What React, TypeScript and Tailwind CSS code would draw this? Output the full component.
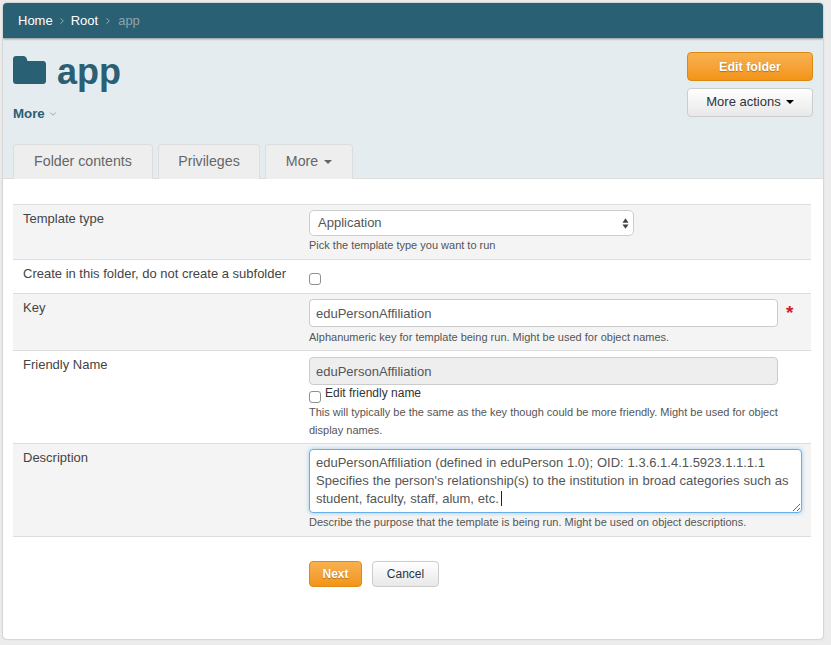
import { FC, ReactNode } from "react";
import { ChevronRight, ChevronDown } from "lucide-react";

const Caret: FC<{ className?: string }> = ({ className }) => (
  <span
    className={`inline-block h-0 w-0 border-x-[4px] border-t-[4px] border-x-transparent ${className}`}
  />
);

const Help: FC<{ children: ReactNode; className?: string }> = ({ children, className }) => (
  <p className={`text-[11px] text-[#555] ${className ?? "leading-[19px]"}`}>{children}</p>
);

const Row: FC<{
  label: string;
  shaded?: boolean;
  className?: string;
  children: ReactNode;
}> = ({ label, shaded, className, children }) => (
  <div
    className={`flex border-b border-[#ddd] ${shaded ? "bg-[#f4f4f4]" : "bg-white"} ${className}`}
  >
    <div className="w-[296px] shrink-0 pl-[10px] pt-[5px] text-[13px] leading-[18px] text-[#444]">
      {label}
    </div>
    <div className="min-w-0 flex-1">{children}</div>
  </div>
);

const inputClass =
  "block h-[28px] w-[469px] rounded-[4px] border border-[#ccc] px-[6px] text-[13px] text-[#555] outline-none";

const Checkbox: FC<{ className?: string }> = ({ className }) => (
  <input
    type="checkbox"
    className={`h-[12px] w-[12px] appearance-none rounded-[3px] border border-[#8f8f8f] bg-white ${className}`}
  />
);

const App: FC = () => {
  return (
    <div className="h-[645px] w-[831px] overflow-hidden bg-[#ececec] pl-[3px] pt-[3px] font-['Liberation_Sans',Arial,sans-serif]">
      <div className="flex h-[636px] w-[820px] flex-col overflow-hidden rounded-[4px] bg-white shadow-[0_0_2px_rgba(0,0,0,0.35)]">
        {/* breadcrumb */}
        <div className="z-10 flex h-[35px] shrink-0 items-center bg-[#2a6073] pl-[15px] text-[13px] shadow-[0_1px_2px_rgba(0,0,0,0.4)]">
          <span className="text-white">Home</span>
          <ChevronRight size={10} className="mx-[4px] text-[#a9c0c9]" />
          <span className="text-white">Root</span>
          <ChevronRight size={10} className="mx-[5px] text-[#a9c0c9]" />
          <span className="text-[#8fa5ae]">app</span>
        </div>

        {/* folder header */}
        <div className="flex h-[141px] shrink-0 flex-col justify-between border-b border-[#ddd] bg-[#e5ecf0] pl-[10px] pr-[10px]">
          <div className="flex justify-between">
            <div>
              <div className="mt-[14px] flex h-[40px] items-center text-[#2a6073]">
                <svg width="33" height="28" viewBox="0 0 33 28" fill="currentColor" className="mt-[-5px]">
                  <path d="M3 0h7c2.500 0 3.500 1.500 4 3.500l.5 1.500H30c1.700 0 3 1.300 3 3v17c0 1.700-1.300 3-3 3H3c-1.700 0-3-1.300-3-3V3c0-1.700 1.300-3 3-3z" />
                </svg>
                <h1 className="ml-[11px] text-[36px] font-bold leading-[40px]">app</h1>
              </div>
              <div className="mt-[13px] flex items-center text-[13.300px] font-bold leading-[18px] text-[#2a6073]">
                More
                <ChevronDown size={10} className="ml-[3px] text-[#8a9aa2]" />
              </div>
            </div>
            <div className="mt-[14px] flex w-[126px] flex-col gap-[7px]">
              <button className="h-[29px] rounded-[4px] border border-[#dd8a14] bg-gradient-to-b from-[#f8b14f] to-[#f39414] pt-[1px] text-[12.500px] font-bold text-white [text-shadow:0_1px_1px_rgba(0,0,0,0.3)]">
                Edit folder
              </button>
              <button className="flex h-[29px] items-center justify-center rounded-[4px] border border-[#ccc] bg-gradient-to-b from-white to-[#e8e8e8] pb-[2px] text-[13px] text-[#2b3440]">
                More actions
                <Caret className="ml-[5px] border-t-black" />
              </button>
            </div>
          </div>
          <div className="mb-[-1px] flex gap-[5px] text-[14.200px] text-[#666]">
            <div className="flex h-[35px] w-[140px] items-center justify-center rounded-t-[4px] border border-b-0 border-[#ddd] bg-[#eee]">
              Folder contents
            </div>
            <div className="flex h-[35px] w-[102px] items-center justify-center rounded-t-[4px] border border-b-0 border-[#ddd] bg-[#eee]">
              Privileges
            </div>
            <div className="flex h-[35px] w-[88px] items-center justify-center rounded-t-[4px] border border-b-0 border-[#ddd] bg-[#eee]">
              More
              <Caret className="ml-[6px] border-t-[#666]" />
            </div>
          </div>
        </div>

        {/* form */}
        <div className="pl-[10px] pr-[12px] pt-[25px]">
          <div className="border-t border-[#ddd]">
            <Row label="Template type" shaded className="h-[55px]">
              <div className="relative mt-[5px] w-[325px]">
                <select className="block h-[26px] w-full appearance-none rounded-[5px] border border-[#ccc] bg-white pl-[8px] text-[13px] text-[#555] outline-none">
                  <option>Application</option>
                </select>
                <svg width="7" height="11" viewBox="0 0 8 12" className="absolute right-[5px] top-[8px] text-[#444]" fill="currentColor">
                  <path d="M4 0l3.500 5H.5zM4 12L.5 7h7z" />
                </svg>
              </div>
              <Help>Pick the template type you want to run</Help>
            </Row>
            <Row label="Create in this folder, do not create a subfolder" className="h-[34px]">
              <Checkbox className="mt-[13px] block" />
            </Row>
            <Row label="Key" shaded className="h-[57px]">
              <div className="relative mt-[5px]">
                <input className={`${inputClass} bg-white`} defaultValue="eduPersonAffiliation" />
                <span className="absolute left-[477px] top-[2px] text-[19px] font-bold leading-[24px] text-[#d0202a]">
                  *
                </span>
              </div>
              <Help className="mt-[1px] leading-[19px]">Alphanumeric key for template being run. Might be used for object names.</Help>
            </Row>
            <Row label="Friendly Name" className="h-[93px]">
              <input
                className={`${inputClass} mt-[6px] bg-[#eee]`}
                defaultValue="eduPersonAffiliation"
                disabled
              />
              <label className="flex h-[18px] items-start text-[12px] leading-[16px] text-[#333]">
                <Checkbox className="mt-[6px] mr-[4px] shrink-0" />
                Edit friendly name
              </label>
              <div className="w-[490px]">
                <Help className="leading-[18px]">
                  This will typically be the same as the key though could be more friendly. Might be
                  used for object display names.
                </Help>
              </div>
            </Row>
            <Row label="Description" shaded className="h-[93px]">
              <div className="relative mt-[5px] w-[493px]">
                <textarea
                  className="block h-[64px] w-full rounded-[4px] border border-[#66afe9] bg-white px-[6px] pb-[2px] pt-[4px] text-[13px] leading-[18px] text-[#555] [word-spacing:0.3px] shadow-[0_0_4px_rgba(102,175,233,0.6)] outline-none"
                  defaultValue={
                    "eduPersonAffiliation (defined in eduPerson 1.0); OID: 1.3.6.1.4.1.5923.1.1.1.1\nSpecifies the person's relationship(s) to the institution in broad categories such as student, faculty, staff, alum, etc."
                  }
                />
                <span className="absolute left-[192px] top-[42px] h-[15px] w-px bg-[#222]" />
              </div>
              <Help>Describe the purpose that the template is being run. Might be used on object descriptions.</Help>
            </Row>
          </div>

          <div className="ml-[296px] mt-[24px] flex gap-[10px]">
            <button className="h-[26px] w-[53px] rounded-[4px] border border-[#dd8a14] bg-gradient-to-b from-[#f8b14f] to-[#f39414] text-[12px] font-bold text-white [text-shadow:0_1px_1px_rgba(0,0,0,0.3)]">
              Next
            </button>
            <button className="h-[26px] w-[67px] rounded-[4px] border border-[#ccc] bg-gradient-to-b from-white to-[#e8e8e8] text-[12px] text-[#2b3440]">
              Cancel
            </button>
          </div>
        </div>
      </div>
    </div>
  );
};

export default App;
